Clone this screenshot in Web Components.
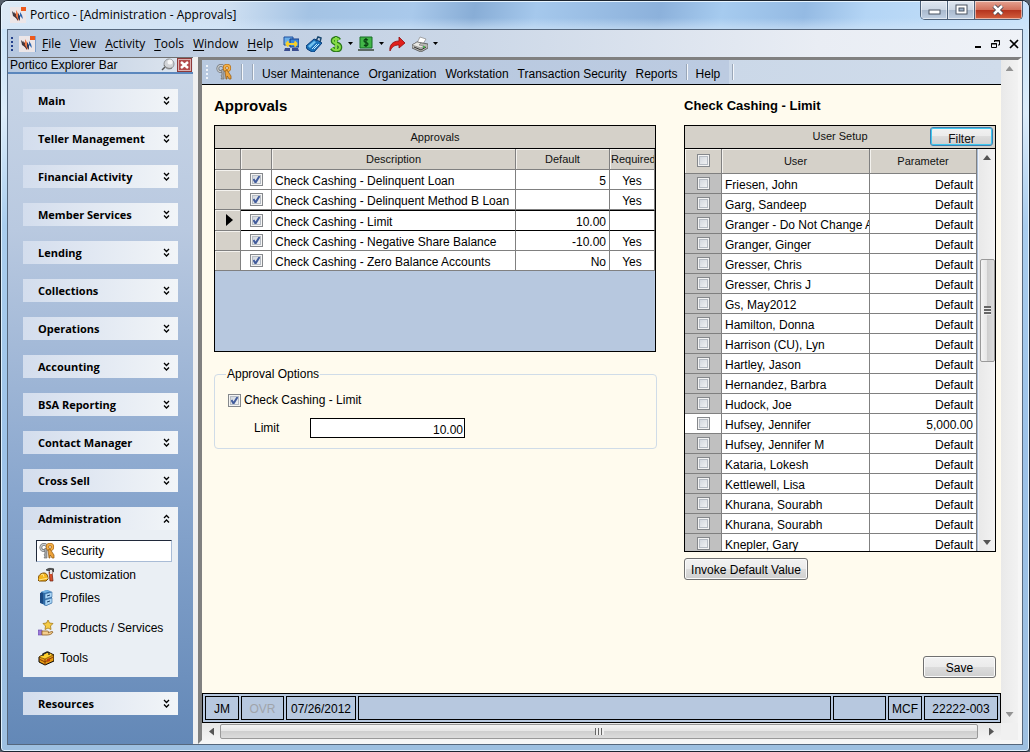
<!DOCTYPE html>
<html lang="en">
<head>
<meta charset="utf-8">
<title>Portico - [Administration - Approvals]</title>
<style>
  html, body { margin: 0; height: 100%; }
  body { background: #56606c; font: 12px/16px "Liberation Sans", Arial, sans-serif; color: #000; overflow: hidden; }
</style>
</head>
<body>
<app-window>
  <title-bar slot="title">Portico - [Administration - Approvals]</title-bar>
  <menu-bar></menu-bar>
  <work-area>
    <explorer-bar slot="side">
      <explorer-group heading="Main"></explorer-group>
      <explorer-group heading="Teller Management"></explorer-group>
      <explorer-group heading="Financial Activity"></explorer-group>
      <explorer-group heading="Member Services"></explorer-group>
      <explorer-group heading="Lending"></explorer-group>
      <explorer-group heading="Collections"></explorer-group>
      <explorer-group heading="Operations"></explorer-group>
      <explorer-group heading="Accounting"></explorer-group>
      <explorer-group heading="BSA Reporting"></explorer-group>
      <explorer-group heading="Contact Manager"></explorer-group>
      <explorer-group heading="Cross Sell"></explorer-group>
      <explorer-group heading="Administration" open>
        <explorer-item icon="keys" selected>Security</explorer-item>
        <explorer-item icon="custom">Customization</explorer-item>
        <explorer-item icon="profiles">Profiles</explorer-item>
        <explorer-item icon="products" roomy>Products / Services</explorer-item>
        <explorer-item icon="toolbox" roomy>Tools</explorer-item>
      </explorer-group>
      <explorer-group heading="Resources"></explorer-group>
    </explorer-bar>
    <tool-strip></tool-strip>
    <approvals-page></approvals-page>
    <status-bar></status-bar>
  </work-area>
</app-window>

<script>
const ICONS = {
  logo: `<rect width="16" height="16" fill="#ece6e8"/><path d="M2 4l3 3 1 4-3-2z" fill="#3a3a44"/><path d="M4 5l4 4v5l-3-4z" fill="#5a3430"/><path d="M6 3l3 5v6L6 9z" fill="#f07a45"/><path d="M8 6l2 3v5l-2-3z" fill="#2b3a5c"/><path d="M10 5l2 3 1 4-3-3z" fill="#2f66ad"/><rect x="11" y="0" width="5" height="4" fill="#ee5a1c"/>`,
  keys: `<circle cx="5" cy="4.500" r="3.200" fill="none" stroke="#77797b" stroke-width="2.800"/><circle cx="5" cy="4.500" r="3.200" fill="none" stroke="#c9cccd" stroke-width="1.200"/><path d="M5 6l3-1v10H5l1-2-1-1 1-2z" fill="#a5a7a9" stroke="#666" stroke-width=".6"/><circle cx="11" cy="4" r="2.600" fill="#d9d3c8" stroke="#b06a15" stroke-width="3"/><circle cx="11" cy="4" r="2.600" fill="none" stroke="#f5b24a" stroke-width="1.600"/><path d="M9 7l2-1 4 6v3h-2l-1-2-1-1v3h-1z" fill="#eda239" stroke="#8b5410" stroke-width=".7"/>`,
  custom: `<path d="M0 13c0-5 3-7 6-7s4 3 4 6l-2 2H1z" fill="#f4b51c" stroke="#7a4a00"/><path d="M3 8l2-1 1 3M1 13l9-2" stroke="#ffe58a" fill="none"/><path d="M8 3c2-2 5-2 8-1v3l-2-1h-3z" fill="#555" stroke="#222" stroke-width=".6"/><path d="M11 5h3l1 9h-3z" fill="#d8502a" stroke="#6b2010" stroke-width=".7"/><path d="M12 3h2v4h-2z" fill="#e3e3e3"/>`,
  profiles: `<path d="M3 2l6-2 5 2v11l-6 3-5-3z" fill="#2d6ca8"/><path d="M2 3l3-1v12l-3-1z" fill="#1b4a83"/><path d="M7 4l7-2v5l-7 2zM7 10l7-2v5l-7 3z" fill="#a9d5f5" stroke="#3a6fa5" stroke-width=".6"/><path d="M9 6l3-1M9 12l3-1" stroke="#1c3f6b"/><path d="M3 2l5-2 5 1-6 2z" fill="#74b3e4"/>`,
  products: `<path d="M10 0l1.500 3 3.500.5-2.500 2.500.5 3.500-3-1.500L7 9.500 7.500 6 5 3.500 8.500 3z" fill="#f5cc45" stroke="#a77914" stroke-width=".8"/><path d="M0 10h4v5H0z" fill="#9a7bd8" stroke="#6244a5" stroke-width=".6"/><path d="M4 11h5c2 0 2 1 1 2 2-1 4-2 5-1-1 2-3 3-6 3H4z" fill="#f4cf8d" stroke="#8d5c20" stroke-width=".8"/>`,
  toolbox: `<path d="M1 7l9-5 6 3v6l-9 4-6-3z" fill="#e59a14" stroke="#000"/><path d="M1 7l9-5 5 3-8 4z" fill="#ffd12e" stroke="#5a3400" stroke-width=".6"/><path d="M7 9v6M1 9l6 3 8-5" stroke="#8a3e00" fill="none"/><path d="M5 6V4l4-2 2 1v2" fill="none" stroke="#222" stroke-width="1.300"/><path d="M9 9l3-1v3l-3 1z" fill="#c2410c"/>`,
  monitors: `<path d="M1 1h9v8H1z" fill="#6aaee8" stroke="#1c4fa0"/><path d="M7 3h9v8H7z" fill="#3c86d8" stroke="#173d88"/><path d="M2 12h5v3H1zM9 12h6l1 3H9z" fill="#3a4d8f"/><path d="M3 8h11M3 8l2.500-2.500M3 8l2.500 2.500M14 8l-2.500-2.500M14 8l-2.500 2.500" stroke="#f6cf2a" stroke-width="1.800" fill="none"/>`,
  card: `<path d="M0 10l8-7 3 1 5 3-8 9H6l-5-3z" fill="#1a71b9" stroke="#0a3f7d"/><path d="M2 10l6-5 2 1-6 6z" fill="#70c2f0"/><path d="M10 5l2-4 3 1-1 4" fill="none" stroke="#17466e" stroke-width="1.500"/><path d="M6 13l5-5M8 13l5-5" stroke="#bfe8ff"/>`,
  dollar: `<path d="M10 4C9 2 4 2 4 5s7 2 7 6-6 4-8 1" fill="none" stroke="#2b7a1b" stroke-width="4.600"/><path d="M7 0v16" stroke="#2b7a1b" stroke-width="2.600"/><path d="M10 4C9 2 4 2 4 5s7 2 7 6-6 4-8 1M7 1v14" fill="none" stroke="#86dc45" stroke-width="2"/>`,
  cash: `<path d="M2 1h12v11H2z" fill="#42b648" stroke="#156c25"/><path d="M0 13h16v2H0z" fill="#5d6a64"/><path d="M10 4C8 3 6 3 6 5s4 1 4 3-3 2-4 1M8 2v9" stroke="#083f12" stroke-width="1.200" fill="none"/>`,
  redo: `<path d="M1 15C0 9 4 5 10 5V1l6 6-6 5V9c-5 0-7 2-9 6z" fill="#e0201b" stroke="#8f0d0d" stroke-width=".8"/>`,
  printer: `<path d="M5 7l3-6 6 2-3 5z" fill="#fff" stroke="#888" stroke-width=".7"/><path d="M0 9l5-3 11 2v4l-7 4-9-4z" fill="#b9b9b4" stroke="#4c4c4c" stroke-width=".8"/><path d="M0 9l5-3 4 1-2 2 5 1-3 2z" fill="#e8e8e4" stroke="#666" stroke-width=".5"/><path d="M2 11l7 3 5-3" stroke="#333" fill="none"/><path d="M11 11h2" stroke="#35b53a" stroke-width="1.500"/>`,
  down: `<path d="M0 6h5L2.500 9z"/>`,
  pin: `<path d="M2 13l4-4" stroke="#555" stroke-width="1.500"/><circle cx="9" cy="7" r="5" fill="#d2d4d7" stroke="#92969b"/><path d="M4 8c2 3 5 4 8 3" fill="none" stroke="#777"/><circle cx="10" cy="5" r="2.500" fill="#f7f7f7"/>`
};
const icon = (name, w = 16) => `<svg class="ic" width="${w}" height="16" viewBox="0 0 ${w} 16" aria-hidden="true">${ICONS[name]}</svg>`;

const BASE = `
  *, :host { box-sizing: border-box; }
  button { font: inherit; color: inherit; margin: 0; padding: 0; border: 0; background: none; }
  svg { display: block; flex: none; }
`;
const CHECK = `
  input[type=checkbox] { appearance: none; display: block; flex: none; width: 13px; height: 13px; margin: 0; border: 1px solid #85888c;
    box-shadow: inset 0 0 0 1px #f4f4f4, inset 0 0 0 2px #b6bcc4; background: linear-gradient(135deg, #cbd1d9, #f8f8f8) }
  input[type=checkbox]:checked { background: url("data:image/svg+xml,%3Csvg xmlns='http://www.w3.org/2000/svg' viewBox='0 0 11 11'%3E%3Cpath d='M2.500 5l2 3.500L8.500 2' fill='none' stroke='%23425c9c' stroke-width='2'/%3E%3C/svg%3E"), linear-gradient(135deg, #cbd1d9, #f8f8f8); }
`;
const BUTTON = `
  .btn { height: 22px; padding-top: 2px; border: 1px solid #707070; border-radius: 3px; box-shadow: inset 0 0 0 1px #fbfbfb;
    background: linear-gradient(#f2f2f2, #ebebeb 50%, #dddddd 50%, #cfcfcf); text-align: center; white-space: nowrap; }
`;

function define(name, html) {
  customElements.define(name, class extends HTMLElement {
    constructor() {
      super();
      const root = this.attachShadow({ mode: 'open' });
      const t = document.createElement('template');
      t.innerHTML = typeof html === 'function' ? html(this) : html;
      root.append(t.content.cloneNode(true));
    }
  });
}

define('app-window', `<style>${BASE}
  :host { display: flex; flex-direction: column; height: 100vh; padding: 0 6px 6px; border: 1px solid #1c2530; border-radius: 8px 8px 4px 4px;
    background: linear-gradient(#c4e0f8, #dcecfa 15%, #a9cdee 30%, #9cc2e8 60%, #9dbfe0); box-shadow: inset 0 0 0 1px #dff0fd; }
  ::slotted([slot=title]) { margin: 0 -6px; }
  .client { flex: 1; min-height: 0; display: flex; flex-direction: column; border: 1px solid #55677d; background: #f0f0f0; }
  </style><slot name="title"></slot><div class="client"><slot></slot></div>`);

define('title-bar', `<style>${BASE}
  :host { display: flex; align-items: flex-start; height: 28px; padding: 0 6px 0 9px; border-radius: 7px 7px 0 0; font: 12px/16px "Open Sans", "Noto Sans", sans-serif;
    box-shadow: inset 1px 1px 0 #e6f4ff;
    background: linear-gradient(#fff0 60%, #d3e6f899), linear-gradient(100deg, #dce9f6 0, #cfe0f2 22%, #a4c3e4 30%, #a9c9eb 40%, #88add6 46%, #a5c8ec 52%, #8cb1db 64%, #a6cbef 70%, #94bae3 78%, #b4d5f5 84%, #c9e3fb); }
  .ic { margin-top: 6px; }
  .t { flex: 1; margin: 6px 4px; white-space: nowrap; }
  .ctl { display: flex; border: 1px solid #4c6078; border-top: 0; border-radius: 0 0 5px 5px; overflow: hidden; }
  button { display: grid; place-items: center; width: 27px; height: 18px; border-right: 1px solid #4c6078; box-shadow: inset 0 0 0 1px #ffffff88;
    background: linear-gradient(#dfe7f1, #cbd6e3 50%, #a9b9cd 50%, #c0d0e3); }
  button:last-child { width: 47px; border: 0; background: linear-gradient(#e5a392, #d16f5a 50%, #b3321d 50%, #d4603f); }
  </style>${icon('logo')}<span class="t"><slot></slot></span>
  <div class="ctl">
    <button aria-label="Minimize"><svg width="13" height="12"><rect x="1" y="6" width="11" height="4" fill="#fff" stroke="#4b5563"/></svg></button>
    <button aria-label="Maximize"><svg width="13" height="12"><rect x="1" y="1" width="11" height="9" fill="#fff" stroke="#4b5563"/><rect x="4" y="4" width="5" height="3" fill="#9db2cb" stroke="#4b5563"/></svg></button>
    <button aria-label="Close"><svg width="13" height="12"><path d="M2 2l8 8M10 2l-8 8" stroke="#4b4a55" stroke-width="4.500"/><path d="M2 2l8 8M10 2l-8 8" stroke="#fff" stroke-width="2.500"/></svg></button>
  </div>`);

define('menu-bar', `<style>${BASE}
  :host { display: flex; align-items: center; height: 27px; padding: 0 3px; font: 12px/16px "Open Sans", "Noto Sans", sans-serif;
    background: linear-gradient(90deg, #b7c8df, #cbd7e7 45%, #e9edf4 80%, #eff2f7); }
  .grip { width: 2px; height: 14px; margin-right: 6px; background: repeating-linear-gradient(#23408c 0 2px, #0000 2px 4px); }
  nav { display: flex; gap: 9px; padding-left: 6px; border-left: 1px solid #7da0cc; margin-right: 10px; }
  u { text-underline-offset: 2px; }
  .tools { display: flex; align-items: center; gap: 7px; flex: 1; }
  .tools button:has(+ .dd) { margin-right: -2px; }
  .dd { margin-right: -2px; }
  .mdi { display: flex; gap: 8px; align-items: center; }
  </style><span class="grip"></span>${icon('logo')}
  <nav aria-label="Menu"><button><u>F</u>ile</button><button><u>V</u>iew</button><button><u>A</u>ctivity</button><button><u>T</u>ools</button><button><u>W</u>indow</button><button><u>H</u>elp</button></nav>
  <div class="tools">
    <button aria-label="Workstations">${icon('monitors')}</button><button aria-label="Card">${icon('card')}</button>
    <button aria-label="Money">${icon('dollar', 14)}</button><button class="dd" aria-label="Money options">${icon('down', 5)}</button>
    <button aria-label="Cash">${icon('cash')}</button><button class="dd" aria-label="Cash options">${icon('down', 5)}</button>
    <button aria-label="Forward">${icon('redo')}</button>
    <button aria-label="Print">${icon('printer')}</button><button class="dd" aria-label="Print options">${icon('down', 5)}</button>
  </div>
  <div class="mdi">
    <button aria-label="Minimize child"><svg width="10" height="10"><path d="M2 8h6" stroke="#000" stroke-width="2"/></svg></button>
    <button aria-label="Restore child"><svg width="10" height="10"><path d="M3.500 3V1.500h5V6H7M3 2h6M.5 4.500h5v4h-5zM0 5h6" fill="none" stroke="#000"/></svg></button>
    <button aria-label="Close child"><svg width="10" height="10"><path d="M1 1l8 8M9 1L1 9" stroke="#000" stroke-width="1.700"/></svg></button>
  </div>`);

define('work-area', `<style>${BASE}
  :host { flex: 1; min-height: 0; display: flex; gap: 5px; }
  .side { display: flex; flex: none; border-top: 1px solid #6f6f6f; }
  .child { flex: 1; min-width: 0; display: grid; grid-template: minmax(0, 1fr) 17px / minmax(0, 1fr) 17px;
    border: solid; border-width: 3px 4px 4px 4px; border-color: #808080 #f6f6f6 #f6f6f6 #808080; background: #f0f0f0; }
  .doc { display: flex; flex-direction: column; min-height: 0; background: #fffbee; }
  </style><div class="side"><slot name="side"></slot></div>
  <div class="child"><div class="doc"><slot></slot></div><scroll-bar vertical plain></scroll-bar><scroll-bar></scroll-bar></div>`);

define('explorer-bar', `<style>${BASE}
  :host { display: flex; flex-direction: column; width: 185px; background: linear-gradient(#c9d6e7, #b9c9e0 25%, #87a5cd 65%, #6388b7); }
  header { display: flex; align-items: center; height: 16px; padding: 0 1px 0 2px; border-bottom: 2px solid #5b87bd; background: linear-gradient(90deg, #b6c8df, #dfe6ef); }
  span { flex: 1; white-space: nowrap; }
  .x { display: grid; place-items: center; width: 15px; height: 14px; margin-left: 2px; border: 1px solid #8e3a3a; background: #b34a4c; box-shadow: inset 0 0 0 1px #dbb0b0; }
  .list { display: flex; flex-direction: column; gap: 15px; padding: 15px; }
  </style><header><span>Portico Explorer Bar</span><button aria-label="Pin">${icon('pin', 15)}</button>
  <button class="x" aria-label="Close explorer"><svg width="9" height="8"><path d="M1 1l7 6M8 1L1 7" stroke="#fff" stroke-width="2.500"/></svg></button></header>
  <div class="list"><slot></slot></div>`);

define('explorer-group', el => {
  const open = el.hasAttribute('open');
  const d = open ? 'M1 4l2.500-2.500L6 4M1 8.500l2.500-2.500L6 8.500' : 'M1 1l2.500 2.500L6 1M1 5.500l2.500 2.500L6 5.500';
  return `<style>${BASE}
  :host { display: block; background: #eaeff4; }
  button { display: flex; align-items: center; justify-content: space-between; width: 100%; height: 23px; padding: 0 8px 0 15px; font: bold 11px/16px "Open Sans", "Noto Sans", sans-serif;
    background: linear-gradient(90deg, #d3dded, #f2f5f8); }
  .body { display: flex; flex-direction: column; height: 147px; padding: 10px 6px 0 13px; }
  </style><button aria-expanded="${open}">${el.getAttribute('heading')}<svg width="7" height="10"><path d="${d}" fill="none" stroke="#000" stroke-width="1.300"/></svg></button>
  ${open ? '<div class="body"><slot></slot></div>' : ''}`;
});

define('explorer-item', el => `<style>${BASE}
  :host { display: block; }
  a { display: flex; align-items: center; gap: 6px; height: 23px; padding-left: 2px; color: #000; text-decoration: none; white-space: nowrap; }
  :host([selected]) a { height: 22px; margin-bottom: 1px; background: #fff; border: 1px solid #a9bcd6; border-top-color: #20293a; border-left-color: #20293a; }
  :host([roomy]) { padding-top: 4px; margin-bottom: -4px; }
  :host([roomy]) a { height: 30px; }
  </style><a href="#">${icon(el.getAttribute('icon'))}<slot></slot></a>`);

define('tool-strip', `<style>${BASE}
  :host { display: flex; align-items: center; flex: none; height: 25px; padding-left: 4px; border-bottom: 1px solid #000; background: linear-gradient(90deg, #b7c8df, #bccbe1 66%, #cbd8e8 66%, #d0dceb); }
  .grip { width: 2px; height: 14px; margin-right: 8px; background: repeating-linear-gradient(#eef3fa 0 2px, #0000 2px 4px); }
  i { width: 2px; height: 16px; border-left: 1px solid #9aa7b8; border-right: 1px solid #f4f7fb; }
  nav { display: flex; gap: 9px; margin: 3px 8px 0; }
  nav + i + nav { margin-right: 12px; }
  a { color: #000; text-decoration: none; white-space: nowrap; }
  .ic { margin-right: 9px; } .ic + i { margin-right: 9px; }
  </style><span class="grip"></span>${icon('keys')}<i></i><i></i>
  <nav><a href="#">User Maintenance</a><a href="#">Organization</a><a href="#">Workstation</a><a href="#">Transaction Security</a><a href="#">Reports</a></nav><i></i>
  <nav><a href="#">Help</a></nav><i></i>`);

define('scroll-bar', `<style>${BASE}
  :host { display: flex; align-items: center; justify-content: space-between; gap: 5px; padding: 0 7px; background: linear-gradient(#e6e6e6, #f3f3f3); }
  .thumb { flex: 1; height: 15px; display: grid; place-items: center; border: 1px solid #999; border-radius: 2px; background: linear-gradient(#f4f4f4, #e6e6e6 45%, #cfcfcf 50%, #dcdcdc); margin: 0 6px 0 1px; }
  .grip { width: 9px; height: 7px; background: repeating-linear-gradient(90deg, #666 0 1px, #eee 1px 3px); }
  .a { width: 5px; height: 8px; background: #555; }
  .l { clip-path: polygon(100% 0, 100% 100%, 0 50%); } .r { clip-path: polygon(0 0, 100% 50%, 0 100%); }
  :host([vertical]) { flex-direction: column; gap: 0; padding: 6px 0; background: linear-gradient(90deg, #e9e9e9, #f2f2f2); }
  :host([vertical]) .a { width: 8px; height: 5px; }
  :host([vertical]) .l { clip-path: polygon(50% 0, 100% 100%, 0 100%); } :host([vertical]) .r { clip-path: polygon(0 0, 100% 0, 50% 100%); }
  :host([vertical]) .thumb { flex: none; width: 15px; height: 103px; margin: 0 0 80px; background: linear-gradient(90deg, #f4f4f4, #e6e6e6 45%, #cfcfcf 50%, #dcdcdc); }
  :host([vertical]) .grip { width: 7px; height: 9px; background: repeating-linear-gradient(#666 0 2px, #eee 2px 3px); }
  :host([plain]) .thumb { display: none; } :host([plain]) .a { opacity: .6; }
  </style><span class="a l"></span><span class="thumb"><span class="grip"></span></span><span class="a r"></span>`);

const GRID = `
  .grid { border: 1px solid #000; background: #b7c8df; overflow: hidden; }
  .cap { display: flex; align-items: center; justify-content: center; height: 23px; border-bottom: 1px solid #000; background: #d5d1c9; font-size: 11px; color: #111; }
  table { width: 100%; table-layout: fixed; border-spacing: 0; }
  th, td { height: 20px; padding: 4px 3px 0; line-height: 15px; border-right: 1px solid #808080; border-bottom: 1px solid #808080; background: #fff; white-space: nowrap; overflow: hidden; text-align: left; font-weight: normal; }
  thead th { font-size: 11px; padding: 1px 1px 0; text-align: center; background: #d5d1c9; box-shadow: inset 1px 1px 0 #f4f2ee; color: #111; }
  td.n { text-align: right; } td.c { text-align: center; padding-left: 2px; padding-right: 2px; }
  td.k { padding: 0; } td.k input { margin: 0 auto; }
`;

define('approvals-grid', () => {
  const rows = [['Check Cashing - Delinquent Loan', '5', 'Yes'], ['Check Cashing - Delinquent Method B Loan', '', 'Yes'], ['Check Cashing - Limit', '10.00', ''], ['Check Cashing - Negative Share Balance', '-10.00', 'Yes'], ['Check Cashing - Zero Balance Accounts', 'No', 'Yes']];
  return `<style>${BASE}${CHECK}${GRID}
  :host { display: block; }
  .grid { height: 227px; }
  thead th { height: 21px; }
  .s { background: #d5d1c9; padding: 0; box-shadow: inset 1px 1px 0 #f4f2ee; }
  .s svg { margin: 0 auto; }
  .cur td { height: 21px; border-top: 1px solid #000; border-bottom-color: #000; } .cur td.s { border-top: 0; border-bottom-color: #808080; padding-left: 4px; }
  </style><div class="grid"><div class="cap" id="c">Approvals</div>
  <table aria-labelledby="c"><colgroup><col style="width:26px"><col style="width:31px"><col><col style="width:94px"><col style="width:45px"></colgroup>
  <thead><tr><th></th><th></th><th>Description</th><th>Default</th><th>Required</th></tr></thead><tbody>
  ${rows.map((r, i) => `<tr class="${i === 2 ? 'cur' : ''}"><td class="s">${i === 2 ? '<svg width="7" height="12"><path d="M0 0l7 6-7 6z"/></svg>' : ''}</td><td class="k"><input type="checkbox" checked aria-label="${r[0]}"></td><td>${r[0]}</td><td class="n">${r[1]}</td><td class="c">${r[2]}</td></tr>`).join('')}
  </tbody></table></div>`;
});

define('user-grid', () => {
  const names = ['Friesen, John', 'Garg, Sandeep', 'Granger - Do Not Change A', 'Granger, Ginger', 'Gresser, Chris', 'Gresser, Chris J', 'Gs, May2012', 'Hamilton, Donna', 'Harrison (CU), Lyn', 'Hartley, Jason', 'Hernandez, Barbra', 'Hudock, Joe', 'Hufsey, Jennifer', 'Hufsey, Jennifer M', 'Kataria, Lokesh', 'Kettlewell, Lisa', 'Khurana, Sourabh', 'Khurana, Sourabh', 'Knepler, Gary'];
  return `<style>${BASE}${CHECK}${BUTTON}${GRID}
  :host { display: block; }
  .grid { display: flex; flex-direction: column; height: 427px; }
  .cap { position: relative; flex: none; padding-bottom: 2px; }
  .cap .btn { position: absolute; right: 2px; top: 1px; width: 63px; height: 19px; font-size: 12px; padding-top: 4px; line-height: 14px; border-color: #3c7fb1; box-shadow: inset 0 0 0 1px #3fc7ee; }
  .wrap { flex: 1; min-height: 0; display: flex; background: #eef3fb; gap: 1px; }
  .rows { flex: 1; min-width: 0; overflow: hidden; background: #fff; border-right: 1px solid #a9bcd6; }
  thead th { height: 25px; } thead input { margin: 0 auto 2px !important; }
  tbody tr:first-child td { height: 19px; }
  td.k { background: #c0c0c0; } tr.own td.k { background: #fff; }
  scroll-bar { width: 16px; flex: none; }
  </style><div class="grid"><div class="cap"><span id="c">User Setup</span><button class="btn">Filter</button></div>
  <div class="wrap"><div class="rows"><table aria-labelledby="c"><colgroup><col style="width:37px"><col><col style="width:107px"></colgroup>
  <thead><tr><th><input type="checkbox" aria-label="Select all"></th><th>User</th><th>Parameter</th></tr></thead><tbody>
  ${names.map(n => { const own = n === 'Hufsey, Jennifer'; return `<tr class="${own ? 'own' : ''}"><td class="k"><input type="checkbox" aria-label="${n}"></td><td>${n}</td><td class="n">${own ? '5,000.00' : 'Default'}</td></tr>`; }).join('')}
  </tbody></table></div><scroll-bar vertical></scroll-bar></div></div>`;
});

define('approvals-page', `<style>${BASE}${CHECK}${BUTTON}
  :host { flex: 1; min-height: 0; display: grid; grid-template-columns: minmax(0, 442fr) minmax(0, 312fr); gap: 28px; padding: 12px 5px 15px 12px; }
  h1, h2 { margin: 0 0 10px; line-height: 18px; font-size: 15px; } h2 { font-size: 13px; }
  .right { display: flex; flex-direction: column; align-items: flex-end; }
  .right > * { flex: none; } h2, user-grid { align-self: stretch; }
  .inv { align-self: flex-start; width: 124px; margin-top: 6px; }
  .save { width: 73px; margin-top: auto; }
  fieldset { margin: 14px -1px 0 0; padding: 0 13px 10px; height: 83px; border: 1px solid #d0dce8; border-radius: 4px; min-width: 0; }
  legend { padding: 0 1px; margin-left: -2px; line-height: 16px; }
  .f { display: flex; align-items: center; gap: 3px; height: 20px; margin-top: 8px; }
  .l { gap: 0; padding-left: 26px; } .l label { width: 56px; }
  .l input { width: 155px; height: 20px; margin: 0; padding: 3px 1px 0; border: 1px solid #000; border-radius: 0; font: inherit; text-align: right; background: #fff; }
  </style>
  <section><h1>Approvals</h1><approvals-grid></approvals-grid>
    <fieldset><legend>Approval Options</legend>
      <div class="f"><input type="checkbox" id="cc" checked><label for="cc">Check Cashing - Limit</label></div>
      <div class="f l"><label for="lim">Limit</label><input id="lim" type="text" value="10.00"></div>
    </fieldset></section>
  <section class="right"><h2>Check Cashing - Limit</h2><user-grid></user-grid><button class="btn inv">Invoke Default Value</button><button class="btn save">Save</button></section>`);

define('status-bar', `<style>${BASE}
  :host { display: flex; gap: 2px; flex: none; height: 30px; padding: 2px; border: 1px solid #000; background: #b7c8df; }
  span { display: grid; place-items: center; width: 34px; padding-top: 2px; border: 1px solid #000; white-space: nowrap; }
  .o { width: 43px; color: #a0a4ab; } .d { width: 70px; } .m { flex: 1; } .e { width: 53px; } .n { width: 74px; }
  </style><span>JM</span><span class="o">OVR</span><span class="d">07/26/2012</span><span class="m"></span><span class="e"></span><span>MCF</span><span class="n">22222-003</span>`);
</script>
</body>
</html>
